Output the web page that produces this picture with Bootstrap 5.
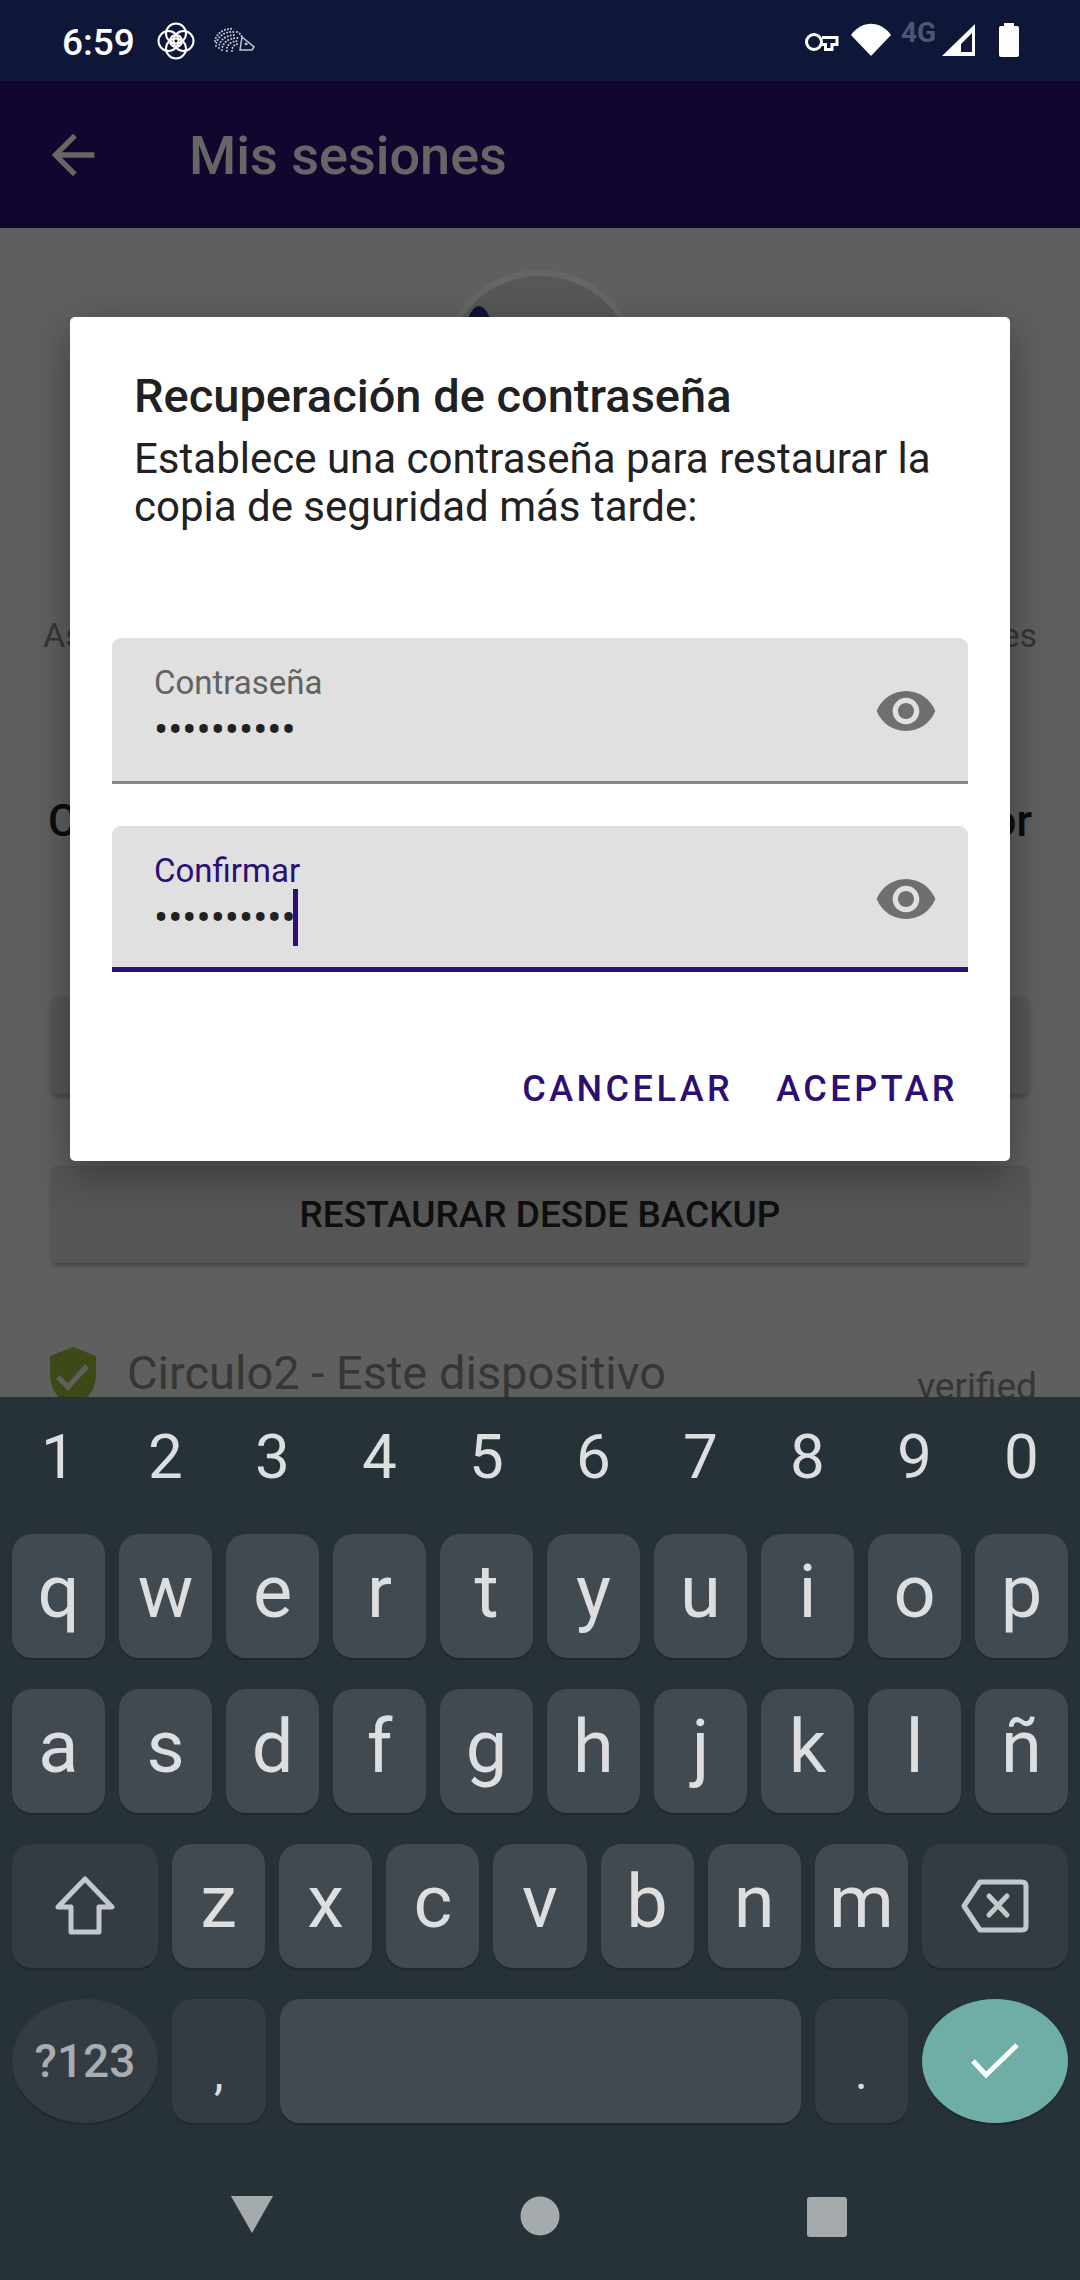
<!DOCTYPE html>
<html lang="es">
<head>
    <meta charset="UTF-8">
    <meta name="viewport" content="width=device-width, initial-scale=1.0">
    <title>Mis sesiones</title>
    <link href="https://cdn.jsdelivr.net/npm/bootstrap@5.3.2/dist/css/bootstrap.min.css" rel="stylesheet">
    <style>
        html, body { height: 2280px; overflow: hidden; }
        body { font-family: Roboto, "Liberation Sans", sans-serif; background: #eee; }

        /* status bar */
        .status-bar { height: 81px; background: #0f1739; color: #fff; padding: 0 0 0 62px; flex: none; position: relative; z-index: 5; }
        .status-time { font-size: 37px; font-weight: 500; line-height: 1; margin-top: 3px; width: 72px; }
        .status-ico { position: absolute; display: block; }

        /* page under the dialog */
        .screen { flex: 1 1 auto; overflow: hidden; min-height: 0; }
        .app-bar { height: 147px; background: #2d0f74; color: #fff; padding-left: 41px; }
        .app-bar h1 { font-size: 54px; font-weight: 500; margin: 3px 0 0 84px; }
        .avatar-ring { width: 200px; height: 200px; border-radius: 50%; border: 6px solid #fff; background: #d4d9df; margin: 42px auto 0; position: relative; overflow: hidden; }
        .avatar-spike { position: absolute; left: 18px; top: 30px; width: 30px; height: 80px; border-radius: 50% 50% 0 0; background: #2d2f80; }
        .hidden-line { padding: 0 43px; color: #878787; font-size: 34px; line-height: 40px; margin-top: 145px; }
        .hidden-title { padding: 0 48px 0 48px; color: #202020; font-size: 44px; line-height: 52px; font-weight: 500; margin-top: 140px; }
        .ghost-btn { display: block; margin: 0 52px; width: 976px; height: 97px; background: #d6d6d6; border: 0; border-radius: 5px; font-size: 37px; font-weight: 500; color: #262626; box-shadow: 0 3px 5px rgba(0,0,0,.3); padding: 0; }
        .ghost-first { margin-top: 150px; }
        .ghost-second { margin-top: 72px; }
        .device-row { padding: 0 43px 0 49px; margin-top: 84px; color: #878787; }
        .device-name { font-size: 47px; line-height: 52px; margin-left: 30px; }
        .device-state { font-size: 37px; line-height: 40px; margin-top: 20px; }

        .scrim { position: absolute; inset: 0; background: rgba(0,0,0,.6); }

        /* dialog */
        .pw-dialog { position: absolute; left: 70px; top: 236px; width: 940px; height: 844px; border: 0; border-radius: 5px; background: #fff; box-shadow: 0 14px 40px rgba(0,0,0,.35); color: #212121; padding: 0 42px; }
        .pw-title { font-size: 47px; line-height: 52px; font-weight: 500; margin: 53px 0 0 22px; }
        .pw-text { font-size: 42px; line-height: 48px; margin: 13px 0 0 22px; }
        .pw-field { height: 146px; background: #e0e0e0; border-radius: 9px 9px 0 0; border-bottom: 3px solid #858585; padding: 27px 0 0 42px; position: relative; }
        .pw-field-first { margin-top: 107px; }
        .pw-field-second { margin-top: 42px; border-bottom: 5px solid #2d0f74; }
        .pw-label { font-size: 33px; line-height: 36px; color: #626262; }
        .pw-field-second .pw-label { color: #2d0f74; }
        .pw-value { font-size: 42px; line-height: 46px; color: #212121; margin-top: 6px; display: flex; align-items: center; }
        .pw-caret { position: absolute; left: 181px; top: 63px; width: 5px; height: 57px; background: #2d0f74; }
        .pw-eye { position: absolute; left: 762px; top: 41px; width: 64px; height: 64px; }
        .pw-actions { margin-top: 97px; padding-right: 10px; gap: 43px; }
        .pw-btn { font-size: 36px; font-weight: 500; letter-spacing: 3.500px; color: #2d0f74; padding: 0; border: 0; background: none; line-height: 40px; }

        /* keyboard */
        .kb { height: 883px; flex: none; background: #273238; padding: 0 12px; position: relative; z-index: 5; }
        .kb-digits { height: 137px; gap: 14px; }
        .kb-digit { flex: 1 1 0; text-align: center; color: #dcdee0; font-size: 62px; line-height: 119px; }
        .kb-row { height: 124px; gap: 14px; margin-bottom: 31px; }
        .kb-key { flex: 1 1 0; min-width: 0; background: #414951; border-radius: 20px; box-shadow: 0 2px 1px #1f282d; color: #dcdee0; font-size: 74px; line-height: 116px; text-align: center; }
        .kb-fn { background: #323c42; }
        .kb-wide { flex: 0 0 146px; }
        .kb-pill { border-radius: 50%; }
        .kb-sym { font-size: 46px; line-height: 124px; color: #a9adb1; font-weight: 500; }
        .kb-punct { font-size: 48px; line-height: 148px; }
        .kb-space { flex: 0 0 521px; }
        .kb-enter { background: #6eaea7; }
        .kb-row svg { display: block; }
        .kb-nav { position: absolute; left: 0; right: 0; top: 795px; height: 50px; }
    </style>
</head>
<body class="d-flex flex-column">
    <!-- barra de estado -->
    <div class="status-bar d-flex align-items-center">
        <div class="status-time">6:59</div>
        <svg class="status-ico" style="left:157px;top:22px" width="38" height="38" viewBox="0 0 38 38" fill="none" stroke="#fff" stroke-width="2">
            <circle cx="19" cy="11.500" r="10"/><circle cx="19" cy="26.500" r="10"/><circle cx="11.500" cy="19" r="10"/><circle cx="26.500" cy="19" r="10"/>
            <path d="M13 19a6 6 0 0 1 12 0M25 19a6 6 0 0 1-12 0M19 13a6 6 0 0 0 0 12"/>
        </svg>
        <svg class="status-ico" style="left:213px;top:27px" width="42" height="26" viewBox="0 0 42 26" fill="none" stroke="#c3c5d2" stroke-linecap="round">
            <g stroke-width="2" stroke-dasharray="0.100 3">
                <path d="M2 14C3 6 12 1 20 2"/><path d="M3 19C3 10 12 4 21 5"/><path d="M6 21C6 13 13 8 23 8"/><path d="M9 23C9 16 15 11 25 11"/><path d="M14 24C13 18 18 14 26 14"/><path d="M19 24C19 20 21 17 26 17"/>
                <path d="M24 5C27 6 28 8 29 10"/>
            </g>
            <path stroke-width="1.500" d="M29 10L41 20L39 23L27 23Z"/><circle cx="33" cy="17" r="1" fill="#c3c5d2"/>
        </svg>
        <svg class="status-ico" style="left:804px;top:32px" width="35" height="20" viewBox="0 0 35 20" fill="none" stroke="#fff" stroke-width="3">
            <circle cx="10" cy="10" r="7.500"/>
            <path d="M18 5.500H33V12.500H28V17.500H21.500V12.500H18"/>
        </svg>
        <svg class="status-ico" style="left:851px;top:23px" width="40" height="34" viewBox="0 0 40 34"><path fill="#fff" d="M0 12C11 -3 29 -3 40 12L20 33Z"/></svg>
        <div class="status-ico" style="left:901px;top:17px;font-size:28px;font-weight:700;color:#4f5574;line-height:32px">4G</div>
        <svg class="status-ico" style="left:942px;top:24px" width="34" height="33" viewBox="0 0 34 33"><path fill="#fff" fill-rule="evenodd" d="M33 0V32H0ZM30 9L19 20V28H30Z"/></svg>
        <svg class="status-ico" style="left:999px;top:23px" width="20" height="34" viewBox="0 0 20 34"><path fill="#fff" d="M5 0H15V3H18Q20 3 20 5V32Q20 34 18 34H2Q0 34 0 32V5Q0 3 2 3H5Z"/></svg>
    </div>

    <div class="screen position-relative">
        <div class="app-bar d-flex align-items-center">
            <svg width="64" height="64" viewBox="0 0 24 24" fill="#fff"><path d="M20 11H7.830l5.590-5.590L12 4l-8 8 8 8 1.410-1.410L7.830 13H20v-2z"/></svg>
            <h1>Mis sesiones</h1>
        </div>
        <div class="avatar-ring"><div class="avatar-spike"></div></div>
        <div class="hidden-line d-flex justify-content-between"><span>As</span><span>es</span></div>
        <div class="hidden-title d-flex justify-content-between"><span>C</span><span>or</span></div>
        <button class="btn ghost-btn ghost-first" type="button"></button>
        <button class="btn ghost-btn ghost-second" type="button">RESTAURAR DESDE BACKUP</button>
        <div class="device-row d-flex align-items-start">
            <svg width="48" height="60" viewBox="0 0 48 60" class="flex-none">
                <path fill="#99b93a" d="M24 0L47 9V28C47 43 37 55 24 60C11 55 1 43 1 28V9Z"/>
                <path fill="none" stroke="#eee" stroke-width="5" d="M9 30L19 40L38 19"/>
            </svg>
            <span class="device-name flex-grow-1">Circulo2 - Este dispositivo</span>
            <span class="device-state">verified</span>
        </div>

        <div class="scrim"></div>

        <!-- dialogo -->
        <div class="card pw-dialog">
            <div class="pw-title">Recuperación de contraseña</div>
            <div class="pw-text">Establece una contraseña para restaurar la copia de seguridad más tarde:</div>
            <div class="pw-field pw-field-first">
                <div class="pw-label">Contraseña</div>
                <div class="pw-value">••••••••••</div>
                <svg class="pw-eye" viewBox="0 0 24 24" fill="#6f6f6f"><path d="M12 4.500C7 4.500 2.730 7.610 1 12c1.730 4.390 6 7.500 11 7.500s9.270-3.110 11-7.500c-1.730-4.390-6-7.500-11-7.500zM12 17c-2.760 0-5-2.240-5-5s2.240-5 5-5 5 2.240 5 5-2.240 5-5 5zm0-8c-1.660 0-3 1.340-3 3s1.340 3 3 3 3-1.340 3-3-1.340-3-3-3z"/></svg>
            </div>
            <div class="pw-field pw-field-second">
                <div class="pw-label">Confirmar</div>
                <div class="pw-value">••••••••••</div>
                <div class="pw-caret"></div>
                <svg class="pw-eye" viewBox="0 0 24 24" fill="#6f6f6f"><path d="M12 4.500C7 4.500 2.730 7.610 1 12c1.730 4.390 6 7.500 11 7.500s9.270-3.110 11-7.500c-1.730-4.390-6-7.500-11-7.500zM12 17c-2.760 0-5-2.240-5-5s2.240-5 5-5 5 2.240 5 5-2.240 5-5 5zm0-8c-1.660 0-3 1.340-3 3s1.340 3 3 3 3-1.340 3-3-1.340-3-3-3z"/></svg>
            </div>
            <div class="pw-actions d-flex justify-content-end">
                <button class="btn pw-btn" type="button">CANCELAR</button>
                <button class="btn pw-btn" type="button">ACEPTAR</button>
            </div>
        </div>
    </div>

    <!-- teclado -->
    <div class="kb">
        <div class="kb-digits d-flex">
            <div class="kb-digit">1</div><div class="kb-digit">2</div><div class="kb-digit">3</div><div class="kb-digit">4</div><div class="kb-digit">5</div><div class="kb-digit">6</div><div class="kb-digit">7</div><div class="kb-digit">8</div><div class="kb-digit">9</div><div class="kb-digit">0</div>
        </div>
        <div class="kb-row d-flex">
            <div class="kb-key">q</div><div class="kb-key">w</div><div class="kb-key">e</div><div class="kb-key">r</div><div class="kb-key">t</div><div class="kb-key">y</div><div class="kb-key">u</div><div class="kb-key">i</div><div class="kb-key">o</div><div class="kb-key">p</div>
        </div>
        <div class="kb-row d-flex">
            <div class="kb-key">a</div><div class="kb-key">s</div><div class="kb-key">d</div><div class="kb-key">f</div><div class="kb-key">g</div><div class="kb-key">h</div><div class="kb-key">j</div><div class="kb-key">k</div><div class="kb-key">l</div><div class="kb-key">ñ</div>
        </div>
        <div class="kb-row d-flex">
            <div class="kb-key kb-fn kb-wide d-flex align-items-center justify-content-center">
                <svg width="62" height="60" viewBox="0 0 62 60" fill="none" stroke="#c5c8cb" stroke-width="5" stroke-linejoin="round"><path d="M31 3L58 31H45V56H17V31H4Z"/></svg>
            </div>
            <div class="kb-key">z</div><div class="kb-key">x</div><div class="kb-key">c</div><div class="kb-key">v</div><div class="kb-key">b</div><div class="kb-key">n</div><div class="kb-key">m</div>
            <div class="kb-key kb-fn kb-wide d-flex align-items-center justify-content-center">
                <svg width="68" height="54" viewBox="0 0 68 54" fill="none" stroke="#c5c8cb" stroke-width="5" stroke-linecap="round" stroke-linejoin="round"><path d="M19 3H61Q65 3 65 7V47Q65 51 61 51H19L3 27Z"/><path d="M28 17L46 36M46 17L28 36"/></svg>
            </div>
        </div>
        <div class="kb-row d-flex">
            <div class="kb-key kb-fn kb-wide kb-pill kb-sym">?123</div>
            <div class="kb-key kb-fn kb-punct">,</div>
            <div class="kb-key kb-space"></div>
            <div class="kb-key kb-fn kb-punct">.</div>
            <div class="kb-key kb-wide kb-pill kb-enter d-flex align-items-center justify-content-center">
                <svg width="48" height="36" viewBox="0 0 48 36" fill="none" stroke="#fff" stroke-width="5"><path d="M2 18L15 32L46 2"/></svg>
            </div>
        </div>
        <svg class="kb-nav" width="1080" height="50" viewBox="0 0 1080 50" fill="#a5abad">
            <path d="M231 4H273L252 41Z"/><circle cx="540" cy="24" r="19.500"/><rect x="807" y="5" width="40" height="40" rx="3"/>
        </svg>
    </div>
</body>
</html>
